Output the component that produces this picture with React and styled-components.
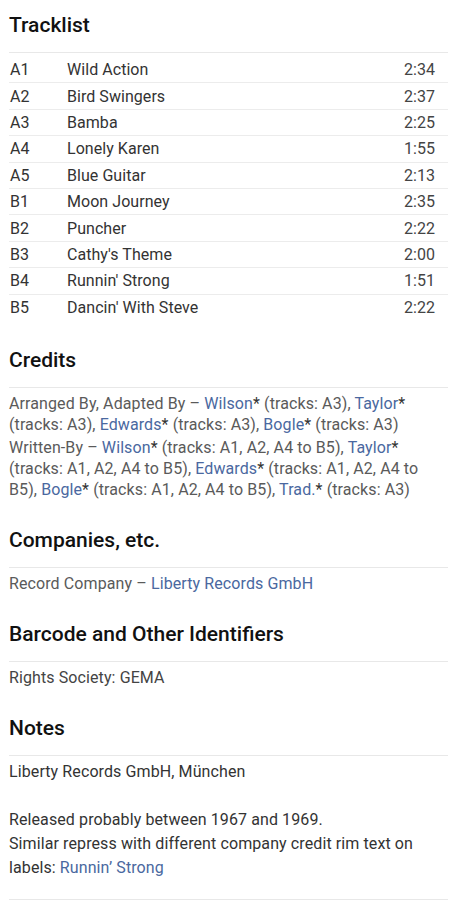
import React from 'react';
import styled, { createGlobalStyle } from 'styled-components';

const GlobalStyle = createGlobalStyle`
  body {
    margin: 0;
    background: #fff;
    font-family: Roboto, "Liberation Sans", Arial, sans-serif;
  }
`

const Page = styled.div`
  padding: 11px 8px 0 9px;
`

const Section = styled.section`
  & + & {
    margin-top: 26px;
  }
`

const Heading = styled.h2`
  margin: 0;
  padding: 0 0 13px;
  font-size: 21px;
  line-height: 28px;
  font-weight: 500;
  color: #111;
  border-bottom: 1px solid #e8e8e8;
`

const TrackTable = styled.div`
  padding-top: 4px;
`

const TrackRow = styled.div`
  display: grid;
  grid-template-columns: 57px 1fr auto;
  align-items: center;
  height: 25.4px;
  padding: 0 13px 0 1px;
  font-size: 16px;
  letter-spacing: 0.05px;
  color: #333;
  & + & {
    border-top: 1px solid #ececec;
  }
`

const Duration = styled.span`
  color: #444;
`

const Body = styled.div`
  padding-top: ${p => p.$top ?? 5}px;
  padding-bottom: ${p => p.$bottom || 0}px;
  font-size: 16px;
  letter-spacing: 0.1px;
  line-height: ${p => p.$lh || 21}px;
  color: ${p => p.$color || '#5a5a5a'};
  border-bottom: ${p => p.$divider ? '1px solid #e8e8e8' : 'none'};
`

const Item = styled.div`
  & + & {
    margin-top: 2px;
  }
`

const Link = styled.a`
  color: #4a68a0;
  text-decoration: none;
`

const Plain = styled.span`
  color: #333;
`

const tracks = [
  ['A1', 'Wild Action', '2:34'],
  ['A2', 'Bird Swingers', '2:37'],
  ['A3', 'Bamba', '2:25'],
  ['A4', 'Lonely Karen', '1:55'],
  ['A5', 'Blue Guitar', '2:13'],
  ['B1', 'Moon Journey', '2:35'],
  ['B2', 'Puncher', '2:22'],
  ['B3', "Cathy's Theme", '2:00'],
  ['B4', "Runnin' Strong", '1:51'],
  ['B5', "Dancin' With Steve", '2:22'],
]

const App = () => {
  return (
    <Page>
      <GlobalStyle />
      <Section>
        <Heading>Tracklist</Heading>
        <TrackTable>
          {tracks.map(([pos, title, time]) => (
            <TrackRow key={pos}>
              <span>{pos}</span>
              <span>{title}</span>
              <Duration>{time}</Duration>
            </TrackRow>
          ))}
        </TrackTable>
      </Section>

      <Section>
        <Heading>Credits</Heading>
        <Body>
          <Item>
            Arranged By, Adapted By – <Link>Wilson</Link><Plain>*</Plain> (tracks: A3), <Link>Taylor</Link><Plain>*</Plain> (tracks: A3), <Link>Edwards</Link><Plain>*</Plain> (tracks: A3), <Link>Bogle</Link><Plain>*</Plain> (tracks: A3)
          </Item>
          <Item>
            Written-By – <Link>Wilson</Link><Plain>*</Plain> (tracks: A1, A2, A4 to B5), <Link>Taylor</Link><Plain>*</Plain> (tracks: A1, A2, A4 to B5), <Link>Edwards</Link><Plain>*</Plain> (tracks: A1, A2, A4 to B5), <Link>Bogle</Link><Plain>*</Plain> (tracks: A1, A2, A4 to B5), <Link>Trad.</Link><Plain>*</Plain> (tracks: A3)
          </Item>
        </Body>
      </Section>

      <Section>
        <Heading>Companies, etc.</Heading>
        <Body>
          Record Company – <Link>Liberty Records GmbH</Link>
        </Body>
      </Section>

      <Section>
        <Heading>Barcode and Other Identifiers</Heading>
        <Body $color="#444">Rights Society: GEMA</Body>
      </Section>

      <Section>
        <Heading>Notes</Heading>
        <Body $top={4} $bottom={19} $lh={24} $color="#333" $divider>
          Liberty Records GmbH, München
          <br />
          <br />
          Released probably between 1967 and 1969.
          <br />
          Similar repress with different company credit rim text on labels: <Link>Runnin’ Strong</Link>
        </Body>
      </Section>
    </Page>
  )
}

export default App;
